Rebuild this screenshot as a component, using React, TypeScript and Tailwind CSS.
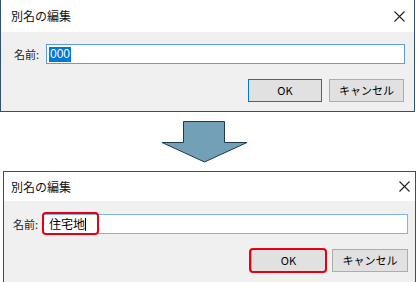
import React from 'react';

const jp = { fontFamily: '"Noto Sans CJK JP", "Noto Sans", sans-serif' };

const CloseX: React.FC = () => (
  <svg width="11" height="11" viewBox="0 0 11 11">
    <path d="M0.5 0.5 L10.5 10.5 M10.5 0.5 L0.5 10.5" stroke="#222" strokeWidth="1.1" fill="none" />
  </svg>
);

const Arrow: React.FC = () => (
  <svg width="418" height="59" viewBox="0 0 418 59" className="block">
    <polygon
      points="183.5,9.5 224.5,9.5 224.5,30.5 247,30.5 204.5,50 162,30.5 183.5,30.5"
      fill="#72a0b6"
      stroke="#1d3a50"
      strokeWidth="1"
    />
  </svg>
);

export default function App() {
  return (
    <div className="w-[418px] h-[282px] bg-white overflow-hidden flex flex-col" style={jp}>
      {/* before */}
      <div className="w-[415px] h-[112px] border-x border-b border-[#2f5270] flex flex-col">
        <div className="h-[32px] bg-white flex items-center justify-between pl-[10px] pr-[9px]">
          <span className="text-[12px] text-[#111] leading-none">別名の編集</span>
          <CloseX />
        </div>
        <div className="flex-1 bg-[#f0f0f0] flex flex-col pt-[12px] pl-[13px] pr-[9px]">
          <div className="flex items-center">
            <span className="w-[32px] text-[11px] text-[#222] leading-none">名前:</span>
            <div className="w-[359px] h-[20px] bg-white border border-[#5c9ee0] flex items-center pl-[2px]">
              <span
                className="bg-[#0078d7] text-white text-[12px] leading-[15px] px-[1px]"
                style={{ fontFamily: '"Liberation Sans", Arial, sans-serif' }}
              >
                000
              </span>
            </div>
          </div>
          <div className="flex justify-end gap-[7px] mt-[15px] pr-[1px]">
            <div className="w-[74px] h-[23px] bg-[#e1e1e1] border border-[#0078d7] flex items-center justify-center text-[11px] text-black">
              OK
            </div>
            <div className="w-[75px] h-[23px] bg-[#e1e1e1] border border-[#adadad] flex items-center justify-center text-[11px] text-black">
              キャンセル
            </div>
          </div>
        </div>
      </div>

      <Arrow />

      {/* after */}
      <div className="ml-[3px] w-[413px] flex-1 border-x border-t border-[#2f5270] flex flex-col">
        <div className="h-[29px] bg-white flex items-center justify-between pl-[7px] pr-[5px]">
          <span className="text-[12px] text-[#111] leading-none">別名の編集</span>
          <CloseX />
        </div>
        <div className="flex-1 bg-[#f0f0f0] flex flex-col pt-[13px] pl-[9px] pr-[7px]">
          <div className="flex items-center">
            <span className="w-[30px] text-[11px] text-[#222] leading-none">名前:</span>
            <div className="relative w-[365px] h-[20px] bg-white border border-[#7fb2e5] flex items-center pl-[5px]">
              <span className="text-[12px] leading-none text-black">住宅地</span>
              <span className="w-px h-[13px] bg-black" />
              <div className="absolute left-[-2px] top-[-3px] w-[57px] h-[23px] border-2 border-[#e8000e] rounded-[4px]" />
            </div>
          </div>
          <div className="flex justify-end gap-[6px] mt-[15px]">
            <div className="relative w-[75px] h-[23px] bg-[#e1e1e1] border border-[#adadad] flex items-center justify-center text-[11px] text-black">
              OK
              <div className="absolute left-[-3px] top-[-2px] w-[78px] h-[25px] border-2 border-[#e8000e] rounded-[4px]" />
            </div>
            <div className="w-[76px] h-[23px] bg-[#e1e1e1] border border-[#adadad] flex items-center justify-center text-[11px] text-black">
              キャンセル
            </div>
          </div>
        </div>
      </div>
    </div>
  );
}
